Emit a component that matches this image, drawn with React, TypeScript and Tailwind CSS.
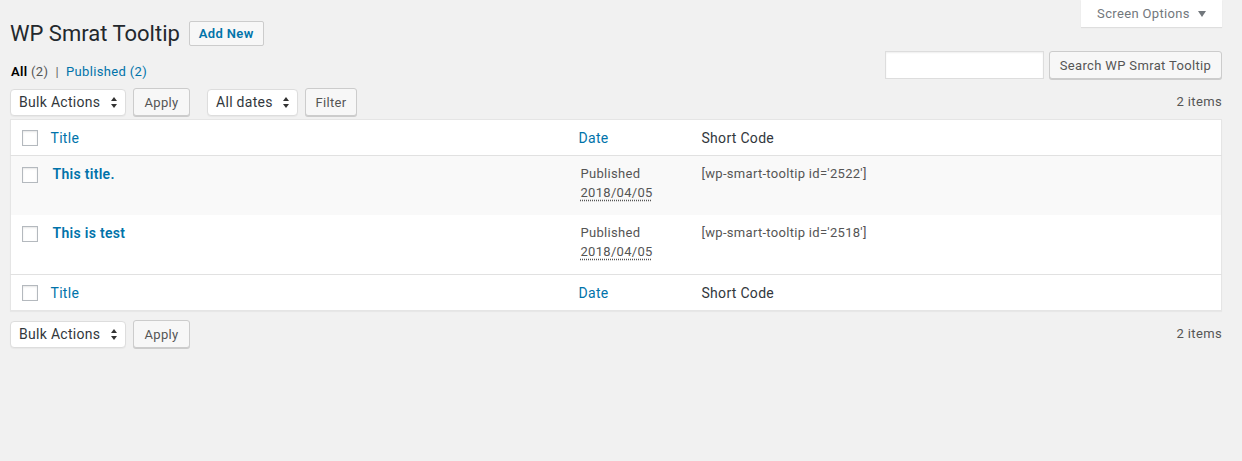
import React from 'react';

const ROWS = [
  { id: 2522, title: 'This title.', date: '2018/04/05', striped: true },
  { id: 2518, title: 'This is test', date: '2018/04/05', striped: false },
];

function Checkbox() {
  return <span className="block w-4 h-4 bg-white border border-[#b4b9be] shadow-[inset_0_1px_2px_rgba(0,0,0,0.1)]" />;
}

function SelectBox({ label, width }: { label: string; width: string }) {
  return (
    <div className={`${width} h-[27px] bg-white border border-[#dddddd] rounded-[4px] shadow-[0_1px_1px_rgba(0,0,0,0.04)] flex items-center justify-between pl-[8px] pr-[7px] text-[14px] tracking-[0.3px] text-[#32373c]`}>
      <span>{label}</span>
      <svg width="8" height="13" viewBox="0 0 8 13" className="text-[#333]">
        <path d="M4 1 L7 5 H1 Z" fill="currentColor" />
        <path d="M4 12 L1 8 H7 Z" fill="currentColor" />
      </svg>
    </div>
  );
}

function Button({ children, className = '' }: { children: React.ReactNode; className?: string }) {
  return (
    <button className={`h-[28px] px-[4px] whitespace-nowrap bg-[#f7f7f7] border border-[#cccccc] rounded-[3px] shadow-[0_1px_0_#cccccc] text-[13px] tracking-[0.35px] text-[#555555] leading-none ${className}`}>
      {children}
    </button>
  );
}

function TableNav({ filters }: { filters: boolean }) {
  return (
    <div className="flex items-center h-[28px]">
      <SelectBox label="Bulk Actions" width="w-[116px]" />
      <Button className="ml-[7px] w-[57px]">Apply</Button>
      {filters && (
        <>
          <div className="ml-[17px]"><SelectBox label="All dates" width="w-[91px]" /></div>
          <Button className="ml-[7px] w-[52px]">Filter</Button>
        </>
      )}
      <span className="ml-auto text-[13px] tracking-[0.35px] text-[#555555]">2 items</span>
    </div>
  );
}

function HeaderRow({ border }: { border: 'top' | 'bottom' }) {
  const b = border === 'bottom' ? 'border-b' : 'border-t';
  return (
    <tr className={`${b} border-[#e1e1e1] h-[36px]`}>
      <td className="pl-[11px] align-middle"><Checkbox /></td>
      <td className="px-[10px] pt-[2px] text-[14px] text-[#0073aa]">Title</td>
      <td className="px-[10px] pt-[2px] text-[14px] text-[#0073aa]">Date</td>
      <td className="px-[10px] pt-[2px] text-[14px] text-[#32373c]">Short Code</td>
    </tr>
  );
}

export default function App() {
  return (
    <div className="w-[1242px] h-[461px] bg-[#f1f1f1] pl-[10px] pr-[20px] text-[13px] tracking-[0.35px] text-[#444444]" style={{ fontFamily: 'Roboto, "Noto Sans", sans-serif' }}>
      {/* title + screen options */}
      <div className="flex items-start justify-between h-[45px]">
        <div className="flex items-center pt-[21px]">
          <h1 className="text-[22px] tracking-[0px] text-[#23282d] leading-[24px] mr-[9px]">WP Smrat Tooltip</h1>
          <button className="h-[25px] px-[9px] bg-[#f7f7f7] border border-[#cccccc] rounded-[2px] text-[13px] font-semibold text-[#0073aa] leading-none">Add New</button>
        </div>
        <div className="w-[141px] h-[27px] bg-white shadow-[0_1px_1px_rgba(0,0,0,0.08)] flex items-center justify-center gap-[8px] text-[13px] text-[#72777c]">
          <span>Screen Options</span>
          <svg width="8" height="6" viewBox="0 0 8 6"><path d="M0 0 H8 L4 6 Z" fill="#72777c" /></svg>
        </div>
      </div>

      {/* views + search */}
      <div className="flex items-start justify-between mt-[6px] h-[28px]">
        <div className="pt-[12px] pl-[1px] text-[13px] leading-[18px]">
          <span className="font-semibold text-black">All</span>
          <span className="text-[#555555]"> (2)</span>
          <span className="text-[#666666] mx-[7px]">|</span>
          <span className="text-[#0073aa]">Published (2)</span>
        </div>
        <div className="flex items-center gap-[5px]">
          <div className="w-[159px] h-[28px] bg-white border border-[#dddddd] shadow-[inset_0_1px_2px_rgba(0,0,0,0.07)]" />
          <Button className="w-[173px]">Search WP Smrat Tooltip</Button>
        </div>
      </div>

      <div className="mt-[9px]">
        <TableNav filters />
      </div>

      <table className="mt-[3px] w-full table-fixed bg-white border border-[#e5e5e5] shadow-[0_1px_1px_rgba(0,0,0,0.04)] border-collapse tracking-[0.3px]">
        <colgroup>
          <col className="w-[30px]" />
          <col className="w-[528px]" />
          <col className="w-[123px]" />
          <col />
        </colgroup>
        <thead>
          <HeaderRow border="bottom" />
        </thead>
        <tbody>
          {ROWS.map((r, i) => (
            <tr key={r.id} className={`${r.striped ? 'bg-[#f9f9f9]' : 'bg-white'} ${i === 0 ? 'h-[59px]' : 'h-[60px]'}`}>
              <td className="pl-[11px] pt-[11px] align-top"><Checkbox /></td>
              <td className="pl-[12px] pr-[10px] pt-[8px] align-top text-[14px] font-semibold text-[#0073aa] leading-[20px]">{r.title}</td>
              <td className="pl-[12px] pr-[10px] pt-[8px] align-top text-[13px] text-[#555555] leading-[19px]">
                <div>Published</div>
                <div className="underline decoration-dotted underline-offset-[3px] decoration-[#555555]">{r.date}</div>
              </td>
              <td className="px-[10px] pt-[8px] align-top text-[13px] text-[#555555] leading-[19px]">[wp-smart-tooltip id='{r.id}']</td>
            </tr>
          ))}
        </tbody>
        <tfoot>
          <HeaderRow border="top" />
        </tfoot>
      </table>

      <div className="mt-[9px]">
        <TableNav filters={false} />
      </div>
    </div>
  );
}
